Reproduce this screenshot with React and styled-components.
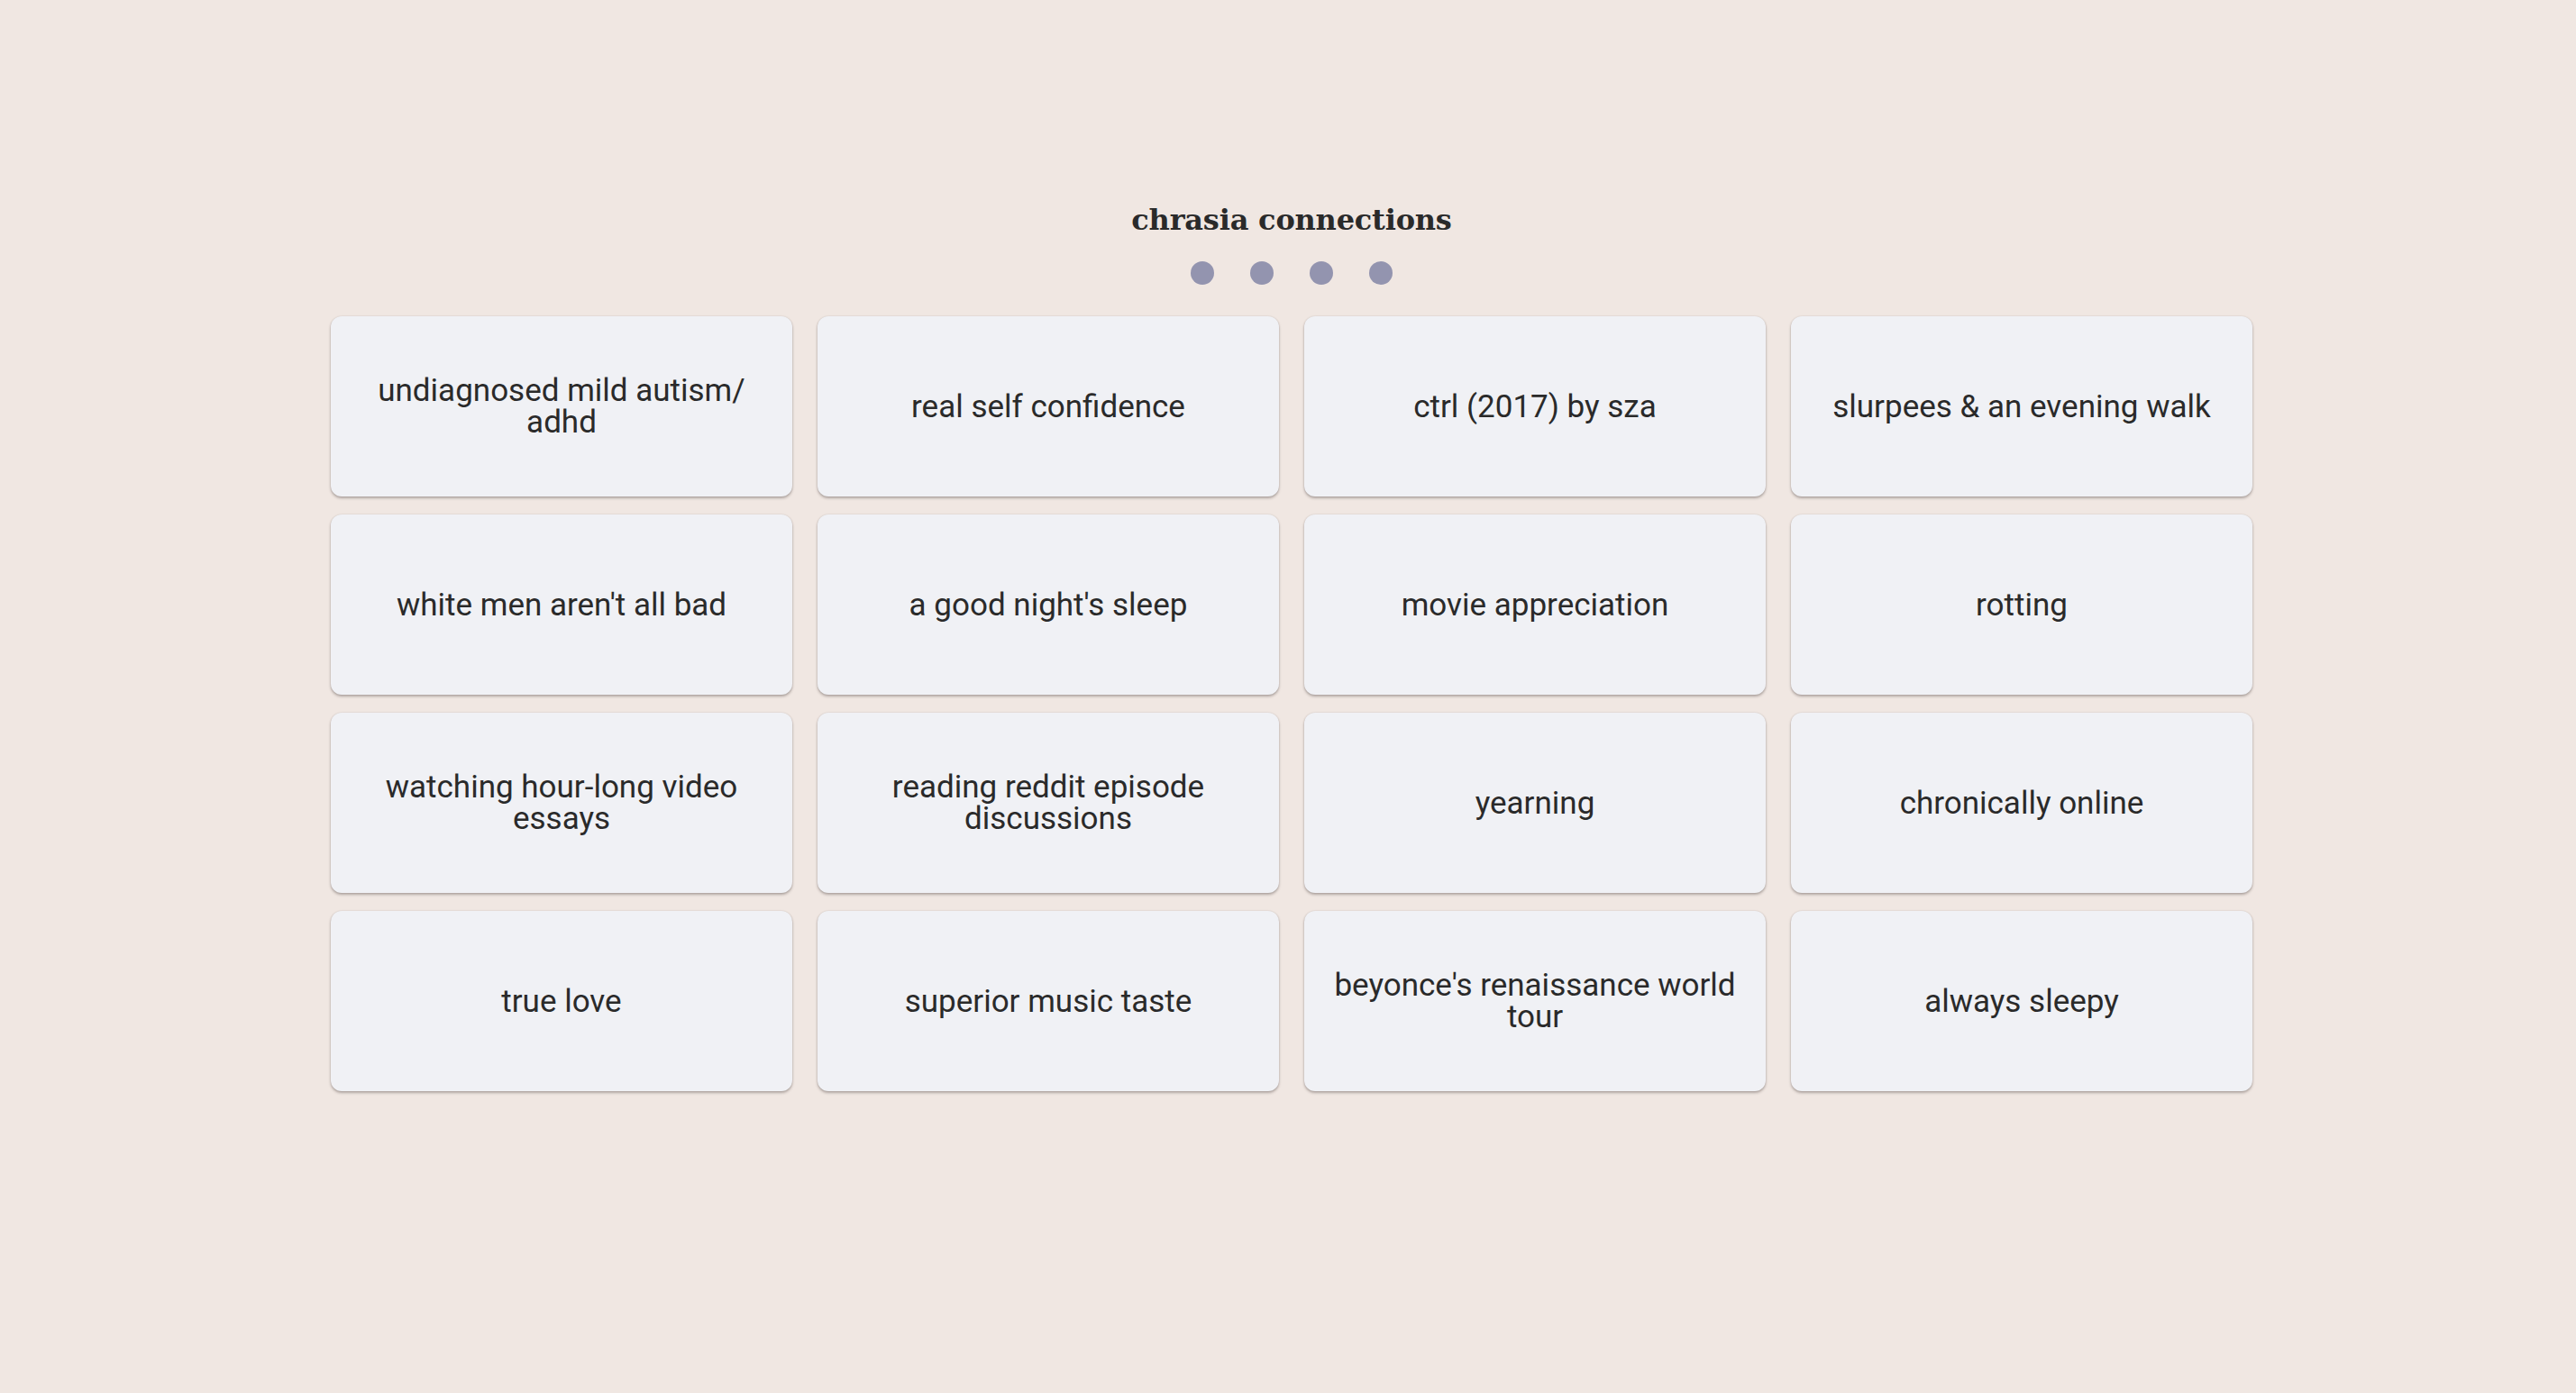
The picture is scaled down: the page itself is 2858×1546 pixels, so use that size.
import styled, { createGlobalStyle } from "styled-components";

const GlobalStyle = createGlobalStyle`
	html, body {
		margin: 0;
		padding: 0;
		background-color: #f0e7e2;
	}
	body {
		min-height: 100vh;
		font-family: Roboto, "Liberation Sans", sans-serif;
	}
`;

const Page = styled.main`
	display: flex;
	flex-direction: column;
	align-items: center;
	padding-top: 217px;
	padding-left: 8px;
`;

const Title = styled.h1`
	margin: 0;
	font-family: "DejaVu Serif", "Liberation Serif", serif;
	font-weight: 700;
	font-size: 32px;
	line-height: 54px;
	color: #2a2a2a;
	letter-spacing: -0.2px;
`;

// 남은 기회 표시 점들
const Dots = styled.div`
	display: flex;
	gap: 40px;
	margin-top: 19px;
	margin-bottom: 35px;
`;

const Dot = styled.span`
	width: 26px;
	height: 26px;
	border-radius: 50%;
	background-color: ${(p) => (p.$used ? "#d8d2cf" : "#9394af")};
`;

const Grid = styled.div`
	display: grid;
	grid-template-columns: repeat(4, 512px);
	column-gap: 28px;
	row-gap: 20px;
`;

const Card = styled.button`
	height: 200px;
	padding: 0 22px;
	border: 0;
	border-radius: 12px;
	background-color: #f0f1f5;
	box-shadow: 0 2px 3px rgba(60, 50, 45, 0.35), 0 0 2px rgba(60, 50, 45, 0.15);

	display: flex;
	align-items: center;
	justify-content: center;
	text-align: center;

	font-family: Roboto, "Liberation Sans", sans-serif;
	font-size: 35px;
	line-height: 35px;
	color: #2a2a2a;
	cursor: pointer;
`;

const words = [
	"undiagnosed mild autism/\u200badhd",
	"real self confidence",
	"ctrl (2017) by sza",
	"slurpees & an evening walk",
	"white men aren't all bad",
	"a good night's sleep",
	"movie appreciation",
	"rotting",
	"watching hour-long video essays",
	"reading reddit episode discussions",
	"yearning",
	"chronically online",
	"true love",
	"superior music taste",
	"beyonce's renaissance world tour",
	"always sleepy",
];

export default function App() {
	const mistakes = 0;
	return (
		<>
			<GlobalStyle />
			<Page>
				<Title>chrasia connections</Title>
				<Dots>
					{[0, 1, 2, 3].map((i) => (
						<Dot key={i} $used={i < mistakes} />
					))}
				</Dots>
				<Grid>
					{words.map((w) => (
						<Card key={w}>{w}</Card>
					))}
				</Grid>
			</Page>
		</>
	);
}
